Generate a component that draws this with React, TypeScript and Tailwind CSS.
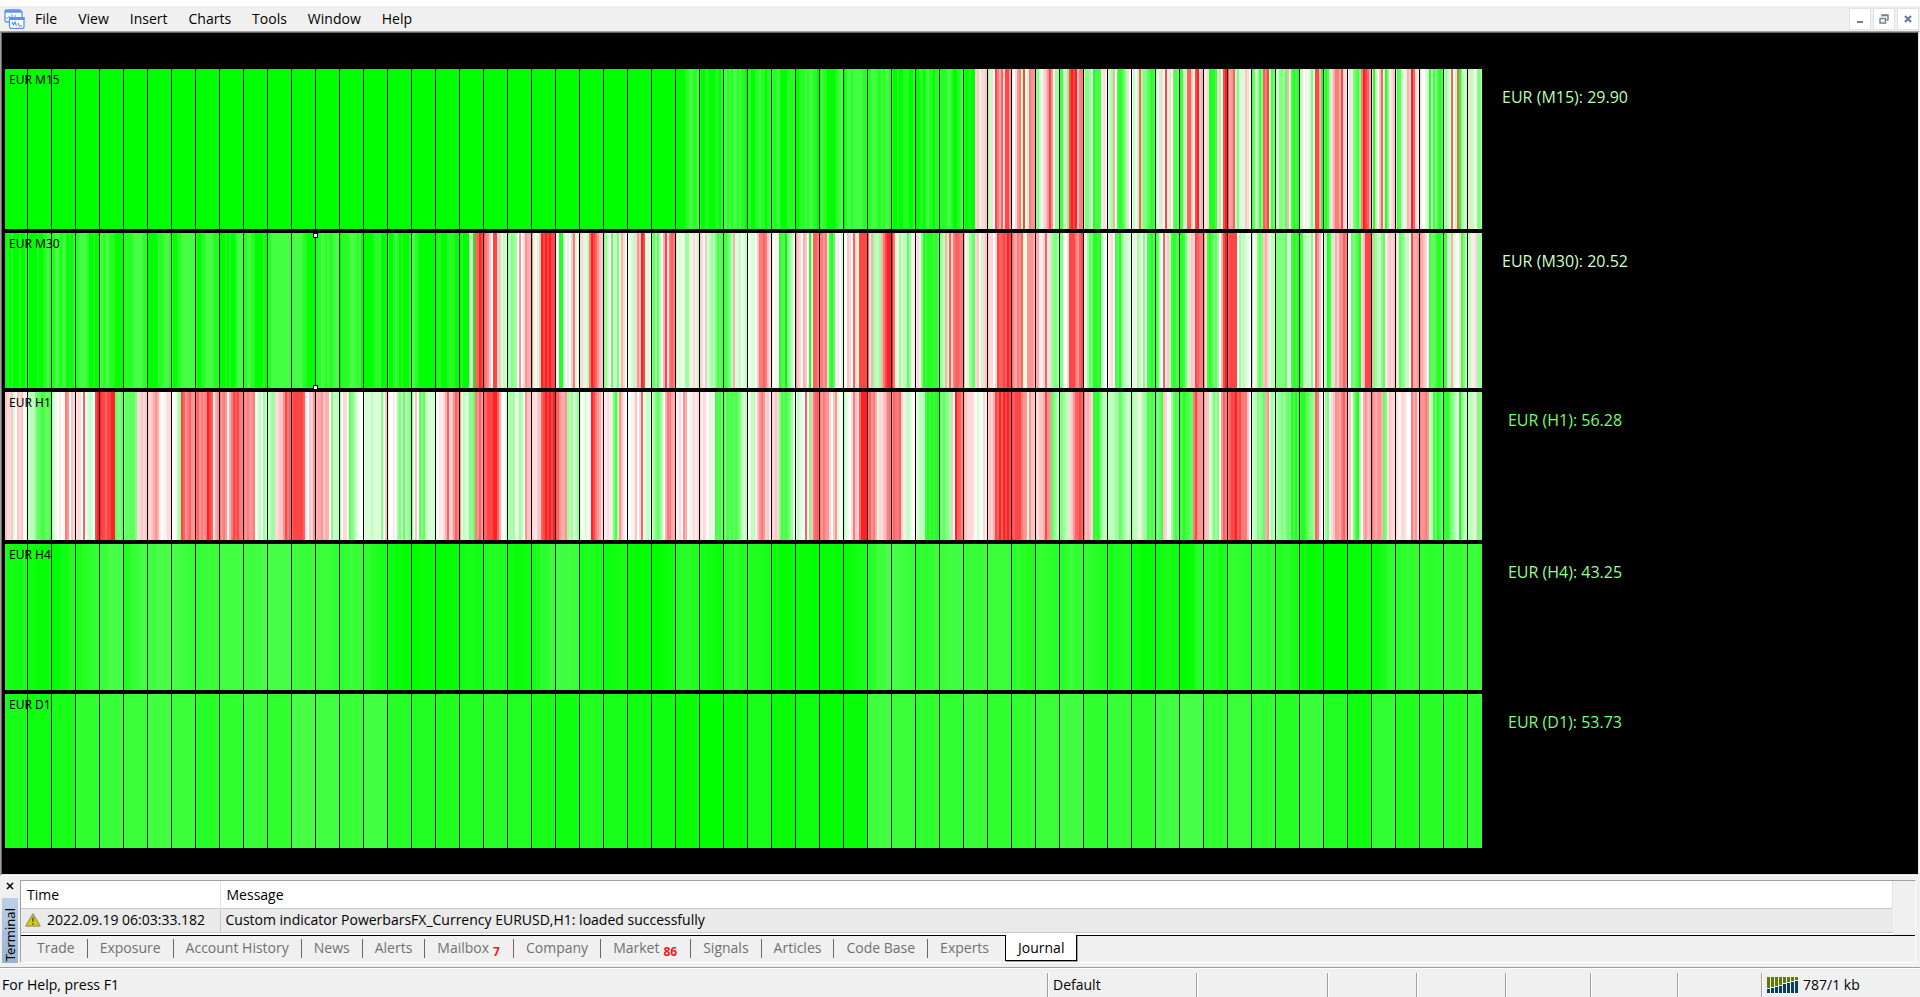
import { useMemo, useState } from "react";

import { clsx } from "clsx";

interface Band {
  name: string;
  value: string;
  grow: string;
  tone: string;
  selected?: boolean;
  cells: string;
}

const SOLID = "I ".repeat(28);

// One group per 24 bars. Upper case is strength, lower case is weakness,
// a dot is neutral and digits are the fine steps of the strong end.
const BANDS: Band[] = [
  {
    name: "M15",
    value: "29.90",
    grow: "grow-[160]",
    tone: "text-[#b2ffb2]",
    cells:
      SOLID +
      "IIIIIHHGGHHG HIIHHIIIHHIH GGHGHGGHGHHI HHIIHHGHHIHH HHHGHIIIHHHH IIHHHGHGGHHI HGHHIIIIHHGG " +
      "IHGGHGGGGGHH HHGGGHHGHGGH HIIHIIHHHIIH IIHHIHGHHIHH HHHHGGHIIHHG HIIHIIbcBbbc DCb.hfdgbhhe " +
      "a.befCh.Cfee DEBAbceheADD GGCbEhihicff CEEDAHGGGaba BCDdAGHGFDb. AC.CgDEEFGHG C.Cb.hBb.FGF " +
      "HGBCggcBhibd babHHHGbDahi gdegCEABBcbA GFBDGEgfhCGF CBEEDFdBGHGH BC.aABEBhhdH FHGCbdffdhbb " +
      ".bBEFGEfihgd bHCAcgBHEabc BGFCaBdbigba bA.BBHCGEGHG BDCBgACgHDBC CbCBaEECCCCC",
  },
  {
    name: "M30",
    value: "20.52",
    grow: "grow-[155]",
    tone: "text-[#cbffcb]",
    selected: true,
    cells:
      "HIHIHIIIHIIH HIIIIHIIHHGH HHGGHHGHIHIH HHGGGGHIIHII GGHGGHHHIIII HHHHHGGGGGHH IIIIIHHHGGGH " +
      "HIIHHGGGGGGG HIIHHGGGGHHH IIIHIHIIHGGG HHGGHHIIIIHI HHGGGGGGGGGG GGGGGGHHIIII HHHGGHGHHGGG " +
      "IHHHHGGGGHGI IIIIIHHHGIII HIIHGHIHIIIH GGHHIIIIIIII IHHIIIHHHHII IHIIICBIggih gfec.hhbcBCB " +
      "DCEDD.e.bedd eB.Bcihihihh ..HHB.B.cfBA bbBACfihgecc EDB.FBCEBdbA .ABCbecihABA EFDFC.dhafgf " +
      "CABAADDBabaC cb.cBCDCEGFG GGFECdBBC.BC .ABB.cffgfcb B.a.HGFIEDCA ecb.dc.HBggf ffefCGHF.a.B " +
      "A.cb.gbBhhhh gadDCCDdfhii ifBaDBCCFD.a abaEHGHHHGHG DDCdCgbfggff dABDEFbc.Cbc cbb.bhgghgih " +
      "gedfegBAeeed ddaabgabDEED EEA.bhhhfegh BADFEHHGHCA. Aab.GFHEBCBB .BaDC.EAGGHG GFB.gacCGHGG " +
      "HHGECbcbhgff ebGHGEFD.dhi ghhhh.DBCBA. D.aEFEcdbBCC EEEEEFBAGHGH HGCCCBE.gec. BCHGCbdbeegf " +
      "..FEFGHbchhh dEDCBEFabcbc bBFEDBC.hdde edcb.GFFGHHG GGBCdBA.bGEC BCaabDDDDDDD",
  },
  {
    name: "H1",
    value: "56.28",
    grow: "grow-[148]",
    tone: "text-[#6fff6f]",
    cells:
      "ccbbcB.cbc.A CCCCEFFGGFFG CBA.a.Afe.cb abb.g.BCB.hi ihhghhiiFEEF EFFFFFEbbcbc cbcdeda.Aabb " +
      "..ACDhgefgee fgefefihgade fefe.dfhghff fefeef.BCADC CCDDbbccehfg ghhhhhga.cbe dddecdd.EBCC " +
      "D.bbAFEDBA.. ABBBCBBBAEAc a..a.DECFCDE E.c.FEFCBBBB .Aaabdgbcegf eBCBBEDFfege gghhhiigd..B " +
      "CDCDABDC.ecc bbaccghihihi ggeddeDCDBCD B.ABAaihfedb aabaBEGCeca. ..Aac.bgABCB BDEFEC.dffdd " +
      ".ab.ed.Aabab baba.BaAGFGF FFGFGFGFECBC .ACCacefebca bbcbEGFGFEDA .CBA.g.Ecfgg fefeeb.ceB.A " +
      "CBA.bfcbgiii fgefdBbbcdff egffgbaBCB.. aBCCCGHGHGHH FEFEEDc.iggf dcbbba.BA.ba bcbdhgigihih " +
      "hghhhfeeBecc bbccdheeFEDC EEDCCbcegghg fcdcbHGHFDCC CCCCDDFEDCBC DCCBaCDDGFGF FEFGcbA.DFGF " +
      "GGHGGFFfheee eccBCEDE.egf fghhighfffc. BCCEDEFdeBDC CDDEDEFEHGHG GHHGFEEDgfa. .DEAbceedfge " +
      "bcAEGHC.decd fedeedFEacbb baAbba..fdeb feefeCCGFHGF HGHFEDC.HECC CCCBbEEEEEEE",
  },
  {
    name: "H4",
    value: "43.25",
    grow: "grow-[146]",
    tone: "text-[#91ff91]",
    cells:
      "323 211 024 356 799 478 899 987 777 888 889 999 877 776 677 643 210 011 001 232 444 212 357 887 " +
      "343 223 100 012 554 321 454 443 201 110 110 123 579 987 667 788 777 777 654 665 576 654 345 211 " +
      "232 015 543 665 766 453 201 000 111 136 566 656 767 777",
  },
  {
    name: "D1",
    value: "53.73",
    grow: "grow-[154]",
    tone: "text-[#76ff76]",
    cells:
      "3 2 3 6 7 7 8 7 5 6 7 6 9 8 7 8 5 4 4 4 5 4 3 2 4 3 2 2 1 0 1 3 1 2 0 1 8 7 6 6 7 6 6 7 8 6 " +
      "7 6 8 9 6 7 6 5 7 4 2 6 4 5 5 6",
  },
];

const CELL_W = 24;
const CHART_W = 1477;
const ORIGIN = -2;

const GREEN_STEPS = [0.08, 0.16, 0.26, 0.38, 0.5, 0.62, 0.73, 0.86, 1];
const RED_STEPS = [0.08, 0.15, 0.23, 0.32, 0.42, 0.52, 0.62, 0.73, 0.87];

function barColor(ch: string): string {
  if (ch === ".") return "rgb(255,255,255)";
  const code = ch.charCodeAt(0);
  if (code < 58) {
    const v = (code - 48) * 8;
    return `rgb(${v},255,${v})`;
  }
  if (code < 91) {
    const v = Math.round(255 * (1 - GREEN_STEPS[code - 65]));
    return `rgb(${v},255,${v})`;
  }
  const v = Math.round(255 * (1 - RED_STEPS[code - 97]));
  return `rgb(255,${v},${v})`;
}

function PowerBars({ cells }: { cells: string }) {
  const groups = useMemo(() => cells.trim().split(/\s+/), [cells]);

  return (
    <svg
      className="absolute inset-0 h-full w-full"
      viewBox={`0 0 ${CHART_W} 100`}
      preserveAspectRatio="none"
      shapeRendering="crispEdges"
      aria-hidden="true"
    >
      {groups.map((group, g) => {
        const w = CELL_W / group.length;
        return group
          .split("")
          .map((ch, i) => (
            <rect key={`${g}-${i}`} x={ORIGIN + g * CELL_W + i * w} y={0} width={w} height={100} fill={barColor(ch)} />
          ));
      })}
      {groups.slice(1).map((_, g) => (
        <rect key={g} x={ORIGIN + (g + 1) * CELL_W} y={0} width={1} height={100} fill="#000" />
      ))}
    </svg>
  );
}

function BandRow({ band }: { band: Band }) {
  const handle = "absolute left-[308px] size-[5px] border border-black bg-white";

  return (
    <section className={clsx("flex min-h-0 basis-0", band.grow)}>
      <div className="relative min-w-0 flex-1">
        <PowerBars cells={band.cells} />
        <h2 className="absolute left-1 top-0.5 font-['Noto_Sans'] text-[12px] leading-[18px] text-black">
          EUR {band.name}
        </h2>
        {band.selected ? (
          <>
            <span className={clsx(handle, "top-0")} />
            <span className={clsx(handle, "-bottom-0.5")} />
          </>
        ) : null}
      </div>
      <div className="w-[436px]">
        <p className={clsx("w-[166px] pt-4 text-center text-[16px] leading-6", band.tone)}>
          EUR ({band.name}): {band.value}
        </p>
      </div>
    </section>
  );
}

function AppIcon() {
  return (
    <svg className="h-5 w-[21px]" viewBox="0 0 21 20" fill="none" stroke="#5b93f0" aria-hidden="true">
      <path d="M2 1h14l2 2v10H2L1 12V2Z" fill="#fff" strokeWidth="1.300" />
      <path d="M1 2.500h16" strokeWidth="2.500" />
      <path d="M3 10.500V8M5 7v2M8 5v3M11 6v2" />
      <path d="M5.500 9h14.500v9l-1 1.300H6.500l-1-1.300Z" fill="#fff" strokeWidth="1.300" />
      <path d="M5.500 9.500h15" strokeWidth="3" />
      <path d="M8 13l1.500 3 1.500-3 1.500 4M14 14l1.500 3.500M17 16v2" strokeWidth="1.200" />
    </svg>
  );
}

function WarningIcon() {
  return (
    <svg className="h-[14px] w-4 shrink-0" viewBox="0 0 16 14" aria-hidden="true">
      <path d="M8 1 15 13H1Z" fill="#d6d100" stroke="#a3a06a" strokeWidth="1.500" strokeLinejoin="round" />
      <path d="M8 4.500v4.500M8 10.300v1.500" stroke="#5c5a24" strokeWidth="1.600" />
    </svg>
  );
}

const SIGNAL = [12, 11, 10, 9, 7, 6, 5, 4];

function SignalIcon() {
  return (
    <svg className="h-4 w-8 shrink-0" viewBox="0 0 32 16" shapeRendering="crispEdges" aria-hidden="true">
      {SIGNAL.map((h, i) => (
        <g key={i}>
          <rect x={i * 4} y={0} width={3} height={h - 1} fill="#5b7a0a" />
          <rect x={i * 4} y={h} width={3} height={16 - h} fill="#083f5c" />
        </g>
      ))}
    </svg>
  );
}

const MENU = ["File", "View", "Insert", "Charts", "Tools", "Window", "Help"];

const WINDOW_BUTTONS = [
  { label: "Minimize", path: "M4 10h6", width: 2 },
  { label: "Restore", path: "M5 4.500V3h6v5H9.500M3 6.500h6M3 6v5h5.500V6M5 3.500h6", width: 1.4 },
  { label: "Close", path: "M4 4l6 6M10 4l-6 6", width: 2.4 },
];

const TABS: { name: string; count?: number }[] = [
  { name: "Trade" },
  { name: "Exposure" },
  { name: "Account History" },
  { name: "News" },
  { name: "Alerts" },
  { name: "Mailbox", count: 7 },
  { name: "Company" },
  { name: "Market", count: 86 },
  { name: "Signals" },
  { name: "Articles" },
  { name: "Code Base" },
  { name: "Experts" },
  { name: "Journal" },
];

function Terminal() {
  const [active, setActive] = useState("Journal");

  return (
    <section className="flex pr-1 pt-1 pb-1">
      <div className="flex w-5 flex-col items-center">
        <button type="button" aria-label="Close terminal" className="flex h-[18px] w-full items-start justify-center pt-0.5">
          <svg className="size-2" viewBox="0 0 8 8" stroke="#000" strokeWidth="1.500" aria-hidden="true">
            <path d="M1 1l6 6M7 1L1 7" />
          </svg>
        </button>
        <div className="flex w-4 flex-1 items-end justify-center bg-gradient-to-b from-[#b9d1ea] to-[#99b4d1] pb-0.5">
          <span className="rotate-180 font-['Noto_Sans'] text-[13px] leading-4 [writing-mode:vertical-rl]">Terminal</span>
        </div>
      </div>

      <div className="min-w-0 flex-1 border-b border-l border-r border-t border-b-white border-l-[#a0a0a0] border-r-white border-t-[#a0a0a0]">
        <div className="flex h-[54px]">
          <div className="min-w-0 flex-1 bg-white">
            <table className="w-full table-fixed border-collapse text-left">
              <thead>
                <tr className="h-[27px] border-b border-[#c8c8c8]">
                  <th className="w-[199px] border-r border-[#e5e5e5] p-0 pl-1.5 pt-0.5 font-normal">Time</th>
                  <th className="border-r border-[#e5e5e5] p-0 pl-1.5 pt-0.5 font-normal">Message</th>
                </tr>
              </thead>
              <tbody>
                <tr className="h-6 border-b border-[#c8c8c8] bg-[#eaeaea]">
                  <td className="border-r border-[#c8c8c8] p-0 pl-1">
                    <span className="flex items-center gap-1.5">
                      <WarningIcon />
                      2022.09.19 06:03:33.182
                    </span>
                  </td>
                  <td className="p-0 pl-[5px]">Custom indicator PowerbarsFX_Currency EURUSD,H1: loaded successfully</td>
                </tr>
              </tbody>
            </table>
          </div>
          <div className="w-[22px] bg-[#f0f0f0]" />
        </div>

        <div className="flex h-[27px] border-t border-black pl-1">
          {TABS.map((tab, i) => {
            const selected = tab.name === active;
            const divided = !selected && TABS[i + 1] && TABS[i + 1].name !== active;
            return (
              <div key={tab.name} className="flex">
                <button
                  type="button"
                  onClick={() => setActive(tab.name)}
                  className={clsx(
                    "flex items-center whitespace-nowrap px-3",
                    selected
                      ? "-mt-px ml-1 h-[26px] border border-t-0 border-black bg-white text-black shadow-[1px_1px_0_#a0a0a0]"
                      : "h-6 text-[#707070]",
                  )}
                >
                  {tab.name}
                  {tab.count ? (
                    <span className="ml-1 mr-px translate-y-1 text-[12px] font-bold leading-4 text-[#ee1c25]">
                      {tab.count}
                    </span>
                  ) : null}
                </button>
                {divided ? <span className="mt-[3px] h-[19px] w-px bg-[#696969]" /> : null}
              </div>
            );
          })}
        </div>
      </div>
    </section>
  );
}

function StatusBar() {
  const cell = "h-6 border-l border-[#a0a0a0] shadow-[inset_1px_0_0_#fff]";

  return (
    <footer className="flex h-[30px] items-center border-t border-[#a0a0a0] pt-1 shadow-[inset_0_1px_0_#fff]">
      <span className="flex-1 pl-0.5">For Help, press F1</span>
      <span className={clsx(cell, "w-[149px] pl-[5px] leading-6")}>Default</span>
      <span className={clsx(cell, "w-[131px]")} />
      <span className={clsx(cell, "w-[89px]")} />
      <span className={clsx(cell, "w-[89px]")} />
      <span className={clsx(cell, "w-[85px]")} />
      <span className={clsx(cell, "w-[87px]")} />
      <span className={clsx(cell, "w-[84px]")} />
      <span className={clsx(cell, "flex w-[159px] items-center gap-1 pl-[5px]")}>
        <SignalIcon />
        787/1 kb
      </span>
    </footer>
  );
}

export default function App() {
  return (
    <div className="flex h-screen flex-col overflow-hidden bg-[#f0f0f0] font-['Open_Sans',sans-serif] text-[14px] leading-5 text-black">
      <header className="flex h-[31px] items-center justify-between border-t-[6px] border-white pl-1 pr-px">
        <div className="flex items-center">
          <AppIcon />
          <nav className="flex gap-px">
            {MENU.map((item) => (
              <button key={item} type="button" className="px-[10px]">
                {item}
              </button>
            ))}
          </nav>
        </div>
        <div className="flex gap-0.5">
          {WINDOW_BUTTONS.map((b) => (
            <button
              key={b.label}
              type="button"
              aria-label={b.label}
              className="flex size-[22px] items-center justify-center border border-[#e2e2e2] bg-white"
            >
              <svg className="size-[14px]" viewBox="0 0 14 14" fill="none" stroke="#72808f" aria-hidden="true">
                <path d={b.path} strokeWidth={b.width} />
              </svg>
            </button>
          ))}
        </div>
      </header>

      <main className="flex min-h-0 flex-1 border-b border-l border-r border-t border-b-white border-l-[#a0a0a0] border-r-white border-t-[#a0a0a0]">
        <div className="flex min-w-0 flex-1 flex-col border border-b-[#e3e3e3] border-l-[#696969] border-r-[#e3e3e3] border-t-[#696969] bg-black pb-[26px] pl-[3px] pt-9">
          <div className="flex min-h-0 flex-1 flex-col gap-1">
            {BANDS.map((band) => (
              <BandRow key={band.name} band={band} />
            ))}
          </div>
        </div>
      </main>

      <Terminal />
      <StatusBar />
    </div>
  );
}
